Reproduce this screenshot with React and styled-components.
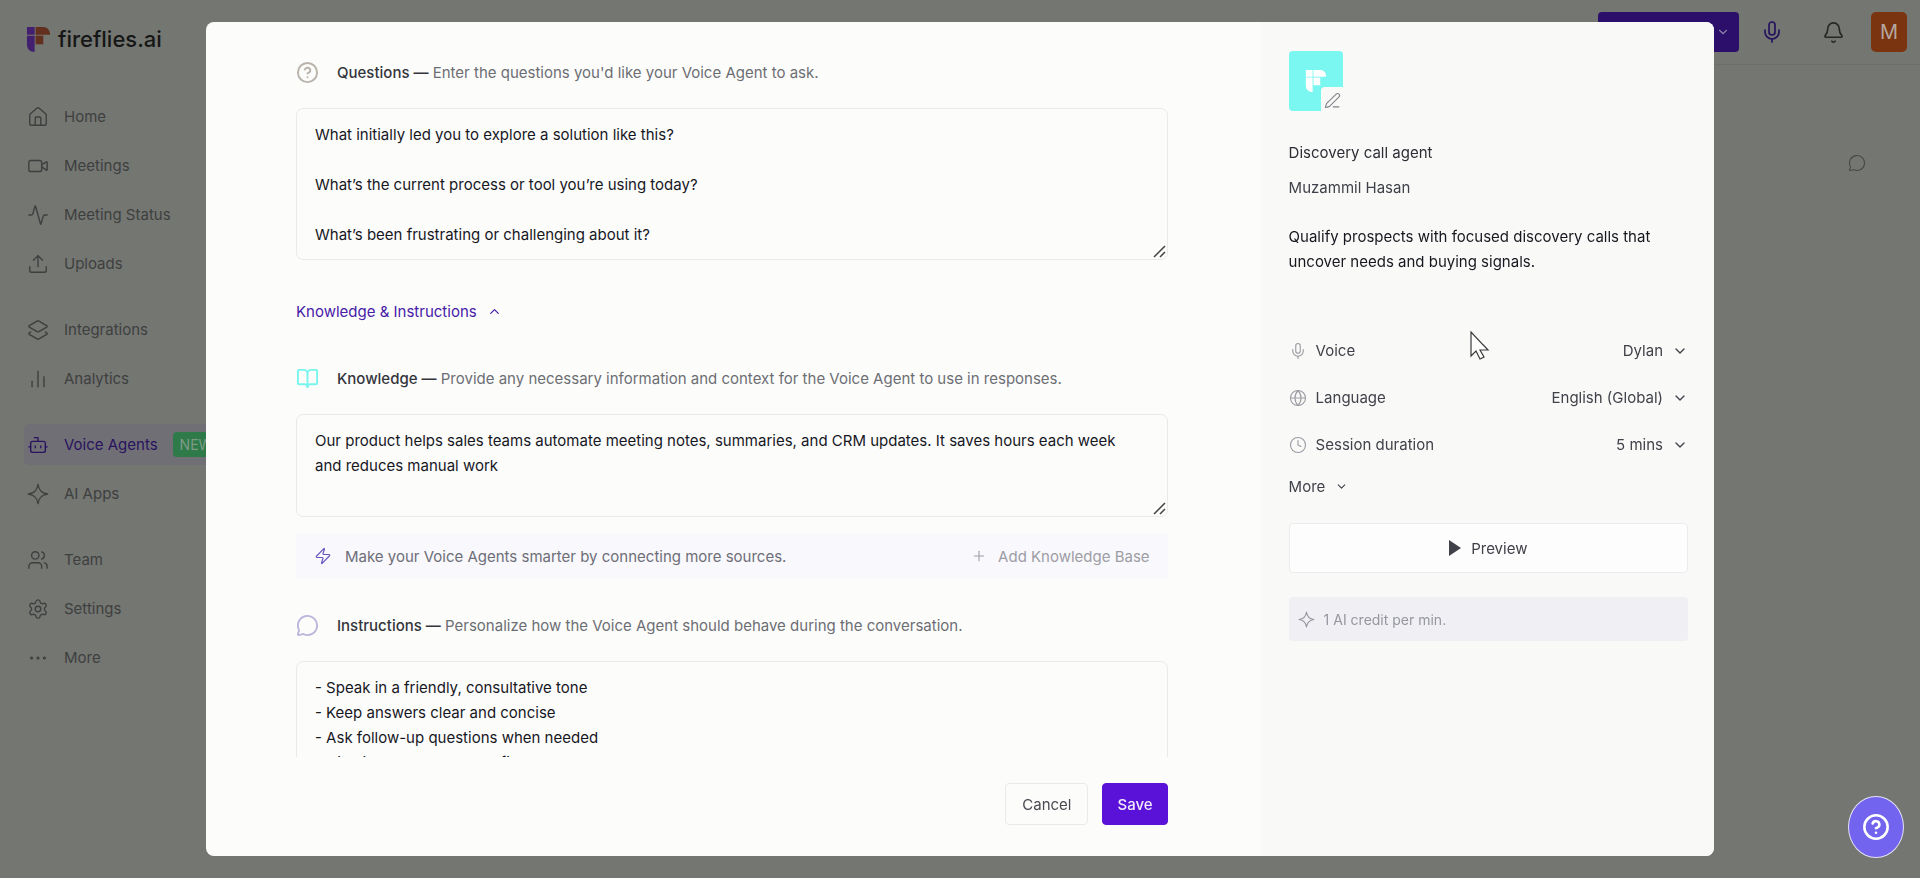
import React, { useState } from 'react';
import styled, { createGlobalStyle } from 'styled-components';
import {
  House, Video, Activity, Upload, Layers2, Bot, Users, Settings, Ellipsis,
  BookOpen, Zap, Plus, MessageCircle, Mic, Bell, Globe, Clock, ChevronDown,
  ChevronUp, CircleHelp, PenLine,
} from 'lucide-react';

const GlobalStyle = createGlobalStyle`
  * {
    box-sizing: border-box;
  }

  body {
    margin: 0;
    background: #747672;
    overflow: hidden;
  }

  body, button, textarea, select {
    font-family: Inter, "Liberation Sans", sans-serif;
    font-size: 15px;
    line-height: 25px;
  }
`;

const navGroups = [
  [
    { label: 'Home', icon: House },
    { label: 'Meetings', icon: Video },
    { label: 'Meeting Status', icon: Activity },
    { label: 'Uploads', icon: Upload },
  ],
  [
    { label: 'Integrations', icon: Layers2 },
    { label: 'Analytics', icon: BarsIcon },
  ],
  [
    { label: 'Voice Agents', icon: Bot, isActive: true, badge: 'NEW' },
    { label: 'AI Apps', icon: StarIcon },
  ],
  [
    { label: 'Team', icon: Users },
    { label: 'Settings', icon: Settings },
    { label: 'More', icon: Ellipsis },
  ],
];

const agentOptions = [
  { id: 'voice', label: 'Voice', icon: Mic, value: 'Dylan' },
  { id: 'language', label: 'Language', icon: Globe, value: 'English (Global)' },
  { id: 'duration', label: 'Session duration', icon: Clock, value: '5 mins' },
];

const defaultQuestions = `What initially led you to explore a solution like this?

What’s the current process or tool you’re using today?

What’s been frustrating or challenging about it?`;

const defaultKnowledge =
  'Our product helps sales teams automate meeting notes, summaries, and CRM updates. It saves hours each week and reduces manual work';

const defaultInstructions = `- Speak in a friendly, consultative tone
- Keep answers clear and concise
- Ask follow-up questions when needed
- Highlight ROI value benefits`;

function StarIcon({ size = 22, strokeWidth = 1.5 }) {
  return (
    <svg width={size} height={size} viewBox="0 0 24 24" fill="none" stroke="currentColor" strokeWidth={strokeWidth} strokeLinejoin="round">
      <path d="M12 1.5c.9 6.5 3.6 9.5 10.500 10.500c-6.900 1-9.600 4-10.500 10.500c-.9-6.500-3.600-9.500-10.500-10.500c6.900-1 9.600-4 10.500-10.500z" />
    </svg>
  );
}

function BarsIcon({ size = 22, strokeWidth = 1.5 }) {
  return (
    <svg width={size} height={size} viewBox="0 0 24 24" fill="none" stroke="currentColor" strokeWidth={strokeWidth}>
      <path d="M5.500 21v-7M12 21V3M18.500 21V9" />
    </svg>
  );
}

const LogoMark = ({ size, top, side }) => (
  <svg width={size} height={size} viewBox="0 0 24 26" aria-hidden="true">
    <path fill={side} d="M0 0h8v8H0z" />
    <path fill={top} d="M9 0h8c4 0 7 3 7 8H9z" />
    <path fill={side} d="M0 9h8v17c-5 0-8-3-8-8z" />
    <path fill={top} d="M9 9h8v9H9z" />
  </svg>
);

const App = () => {
  const [questions, setQuestions] = useState(defaultQuestions);
  const [knowledge, setKnowledge] = useState(defaultKnowledge);
  const [instructions, setInstructions] = useState(defaultInstructions);

  return (
    <Page>
      <GlobalStyle />

      <Sidebar>
        <Brand href="#">
          <LogoMark size={25} top="#63301f" side="#43206f" />
          fireflies.ai
        </Brand>
        {navGroups.map((group, index) => (
          <NavGroup key={index}>
            {group.map(({ label, icon: Icon, isActive, badge }) => (
              <NavItem key={label} href="#" $active={isActive}>
                <Icon size={22} strokeWidth={1.5} />
                {label}
                {badge && <Badge>{badge}</Badge>}
              </NavItem>
            ))}
          </NavGroup>
        ))}
      </Sidebar>

      <Main>
        <TopBar>
          <CaptureButton aria-label="Capture"><ChevronDown size={14} /></CaptureButton>
          <TopIcon aria-label="Record" $color="#26135f"><Mic size={24} strokeWidth={1.7} /></TopIcon>
          <TopIcon aria-label="Notifications" $color="#262725"><Bell size={23} strokeWidth={1.7} /></TopIcon>
          <UserAvatar>M</UserAvatar>
        </TopBar>
        <SideChat><MessageCircle size={18} strokeWidth={1.5} /></SideChat>
      </Main>

      <Overlay>
        <Modal role="dialog" aria-label="Edit voice agent">
          <Editor>
            <Scroll>
              <SectionHead htmlFor="questions" $icon="#b9b2aa">
                <CircleHelp size={23} strokeWidth={2} />
                <span><b>Questions —</b> Enter the questions you'd like your Voice Agent to ask.</span>
              </SectionHead>
              <TextBox id="questions" $height={152} value={questions} onChange={e => setQuestions(e.target.value)} />

              <Toggle>
                Knowledge &amp; Instructions <ChevronUp size={15} />
              </Toggle>

              <SectionHead htmlFor="knowledge" $icon="#7af5ee">
                <BookOpen size={23} strokeWidth={2} />
                <span><b>Knowledge —</b> Provide any necessary information and context for the Voice Agent to use in responses.</span>
              </SectionHead>
              <TextBox id="knowledge" $height={103} value={knowledge} onChange={e => setKnowledge(e.target.value)} />

              <Banner>
                <Zap size={18} strokeWidth={1.6} color="#6a55c4" />
                <span>Make your Voice Agents smarter by connecting more sources.</span>
                <AddButton><Plus size={16} strokeWidth={1.6} />Add Knowledge Base</AddButton>
              </Banner>

              <SectionHead htmlFor="instructions" $icon="#bdb5dc">
                <MessageCircle size={23} strokeWidth={2} />
                <span><b>Instructions —</b> Personalize how the Voice Agent should behave during the conversation.</span>
              </SectionHead>
              <TextBox id="instructions" $height={152} value={instructions} onChange={e => setInstructions(e.target.value)} />
            </Scroll>
            <Footer>
              <Button>Cancel</Button>
              <Button $primary>Save</Button>
            </Footer>
          </Editor>

          <Details>
            <AgentAvatar>
              <LogoMark size={22} top="#fff" side="#fff" />
              <EditAvatar aria-label="Edit avatar"><PenLine size={17} strokeWidth={1.5} /></EditAvatar>
            </AgentAvatar>
            <AgentName>Discovery call agent</AgentName>
            <AgentOwner>Muzammil Hasan</AgentOwner>
            <AgentText>Qualify prospects with focused discovery calls that uncover needs and buying signals.</AgentText>

            {agentOptions.map(({ id, label, icon: Icon, value }) => (
              <OptionRow key={id}>
                <Icon size={18} strokeWidth={1.5} color="#9b9ba2" />
                <label htmlFor={id}>{label}</label>
                <OptionSelect id={id} defaultValue={value}>
                  <option>{value}</option>
                </OptionSelect>
                <ChevronDown size={16} />
              </OptionRow>
            ))}
            <MoreButton>More <ChevronDown size={13} /></MoreButton>

            <PreviewButton>
              <svg width="12" height="16" viewBox="0 0 12 16" fill="currentColor"><path d="M0 0l12 8-12 8z" /></svg>
              Preview
            </PreviewButton>
            <Credit><StarIcon size={17} />1 AI credit per min.</Credit>
          </Details>

          <Pointer width="20" height="30" viewBox="0 0 20 30">
            <path d="M1 1v24l5-5 4 8 4-2-4-7h8z" fill="#fdfdfc" stroke="#3a3a3c" strokeWidth="1.200" />
          </Pointer>
        </Modal>
      </Overlay>

      <HelpButton aria-label="Help"><CircleHelp size={28} strokeWidth={2.2} /></HelpButton>
    </Page>
  );
};

const Page = styled.div`
  display: flex;
  min-height: 100vh;
`;

const Sidebar = styled.nav`
  width: 280px;
  padding: 0 24px;
  color: #3e3f3f;
`;

const Brand = styled.a`
  display: flex;
  align-items: center;
  gap: 7px;
  height: 78px;
  padding-left: 2px;
  margin-bottom: 18px;
  color: #161616;
  font-size: 22px;
  font-weight: 500;
  text-decoration: none;
`;

const NavGroup = styled.div`
  display: grid;
  gap: 8px;
  margin-bottom: 25px;
`;

const NavItem = styled.a`
  display: flex;
  align-items: center;
  gap: 15px;
  height: 41px;
  padding-left: 3px;
  border-radius: 5px;
  color: ${p => p.$active ? '#28135f' : 'inherit'};
  background: ${p => p.$active ? '#706f75' : 'transparent'};
  text-decoration: none;
  white-space: nowrap;
`;

const Badge = styled.span`
  padding: 0 7px;
  border-radius: 4px;
  background: #2f7a49;
  color: #7f9b86;
  font-size: 14px;
`;

const Main = styled.main`
  flex: 1;
`;

const TopBar = styled.header`
  display: flex;
  align-items: center;
  justify-content: flex-end;
  height: 65px;
  padding-right: 13px;
  border-bottom: 1px solid #6c6e6a;
`;

const CaptureButton = styled.button`
  display: flex;
  align-items: center;
  justify-content: flex-end;
  width: 141px;
  height: 40px;
  padding: 0 9px;
  border: none;
  border-radius: 4px;
  background: #2b0f6b;
  color: #8c80a8;
`;

const TopIcon = styled.button`
  display: flex;
  padding: 0;
  margin-left: 21px;
  margin-right: 17px;
  border: none;
  background: transparent;
  color: ${p => p.$color};
`;

const UserAvatar = styled.button`
  width: 36px;
  height: 40px;
  padding: 0;
  margin-left: 9px;
  border: none;
  border-radius: 5px;
  background: #7a3510;
  color: #b5a79f;
  font-size: 20px;
`;

const SideChat = styled.div`
  display: flex;
  justify-content: flex-end;
  padding: 89px 54px 0 0;
  color: #494a48;
`;

const Overlay = styled.div`
  position: fixed;
  inset: 0;
  display: flex;
  padding: 22px 206px;
`;

const Modal = styled.div`
  position: relative;
  flex: 1;
  display: flex;
  overflow: hidden;
  border-radius: 8px;
  background: #fcfdfb;
`;

const Editor = styled.section`
  flex: 1;
  display: flex;
  flex-direction: column;
  min-width: 0;
`;

const Scroll = styled.div`
  flex: 1;
  min-height: 0;
  overflow: hidden;
  padding: 36px 94px 0 90px;
`;

const SectionHead = styled.label`
  display: flex;
  align-items: center;
  gap: 18px;
  height: 28px;
  margin-bottom: 22px;
  color: #6d6e74;

  b {
    color: #34353c;
    font-weight: 500;
  }

  svg {
    flex: none;
    color: ${p => p.$icon};
  }
`;

const TextBox = styled.textarea`
  display: block;
  width: 100%;
  height: ${p => p.$height}px;
  padding: 13px 26px 13px 18px;
  border: 1px solid #e9eaea;
  border-radius: 7px;
  background: transparent;
  color: #17171f;
  overflow: hidden;
  outline: none;

  &::-webkit-resizer {
    background: url("data:image/svg+xml,%3Csvg xmlns='http://www.w3.org/2000/svg' width='15' height='15' fill='none' stroke='%23444' stroke-width='1.5'%3E%3Cpath d='M2 13L13 2M8 13l5-5'/%3E%3C/svg%3E") no-repeat center;
  }
`;

const Toggle = styled.button`
  display: flex;
  align-items: center;
  gap: 10px;
  padding: 0;
  margin: 39px 0 40px;
  border: none;
  background: transparent;
  color: #4820a8;
`;

const Banner = styled.div`
  display: flex;
  align-items: center;
  gap: 13px;
  height: 46px;
  padding: 0 18px;
  margin: 16px 0 32px;
  background: #f9f8fc;
  color: #6d6e78;
`;

const AddButton = styled.button`
  display: flex;
  align-items: center;
  gap: 11px;
  padding: 0;
  margin-left: auto;
  border: none;
  background: transparent;
  color: #9d9da5;
`;

const Footer = styled.footer`
  display: flex;
  justify-content: flex-end;
  gap: 14px;
  padding: 26px 94px 31px 90px;
`;

const Button = styled.button`
  height: 42px;
  padding: 0 ${p => p.$primary ? 14 : 16}px;
  border: 1px solid ${p => p.$primary ? '#5a12d8' : '#e9eaea'};
  border-radius: 4px;
  background: ${p => p.$primary ? '#5a12d8' : 'transparent'};
  color: ${p => p.$primary ? '#f0eafc' : '#4a4a52'};
  font-weight: ${p => p.$primary ? 500 : 400};
`;

const Details = styled.aside`
  flex: 0 0 30%;
  padding: 29px 26px 0 27px;
  background: #f9faf8;
  color: #404149;
`;

const AgentAvatar = styled.div`
  position: relative;
  display: flex;
  align-items: center;
  justify-content: center;
  width: 54px;
  height: 60px;
  margin-bottom: 29px;
  border-radius: 4px;
  background: #7af7f0;
`;

const EditAvatar = styled.button`
  position: absolute;
  right: 0;
  bottom: 0;
  display: flex;
  padding: 5px 2px 2px 3px;
  border: none;
  border-radius: 4px 0 0 0;
  background: #f9faf8;
  color: #808088;
`;

const AgentName = styled.div`
  margin-bottom: 10px;
  color: #2d2d35;
`;

const AgentOwner = styled.div`
  margin-bottom: 24px;
`;

const AgentText = styled.p`
  margin: 0 0 53px;
  color: #17171f;
`;

const OptionRow = styled.div`
  display: flex;
  align-items: center;
  gap: 9px;
  height: 47px;
`;

const OptionSelect = styled.select`
  flex: 1;
  min-width: 0;
  padding: 0;
  border: none;
  appearance: none;
  background: transparent;
  color: inherit;
  text-align-last: right;
`;

const MoreButton = styled.button`
  display: flex;
  align-items: center;
  gap: 10px;
  height: 36px;
  padding: 0;
  margin-bottom: 19px;
  border: none;
  background: transparent;
  color: inherit;
`;

const PreviewButton = styled.button`
  display: flex;
  align-items: center;
  justify-content: center;
  gap: 10px;
  width: 100%;
  height: 50px;
  margin-bottom: 24px;
  border: 1px solid #ebecec;
  border-radius: 4px;
  background: #fdfdfd;
  color: inherit;
`;

const Credit = styled.div`
  display: flex;
  align-items: center;
  gap: 9px;
  height: 44px;
  padding: 0 9px;
  border-radius: 4px;
  background: #efeff4;
  color: #96969f;
  font-size: 14px;
`;

const Pointer = styled.svg`
  position: absolute;
  top: 309px;
  right: 224px;
`;

const HelpButton = styled.button`
  position: fixed;
  right: 16px;
  bottom: 20px;
  display: flex;
  align-items: center;
  justify-content: center;
  width: 56px;
  height: 62px;
  padding: 0;
  border: 1px solid #e4e2f4;
  border-radius: 50%;
  background: #7364ef;
  color: #fff;
`;

export default App;
